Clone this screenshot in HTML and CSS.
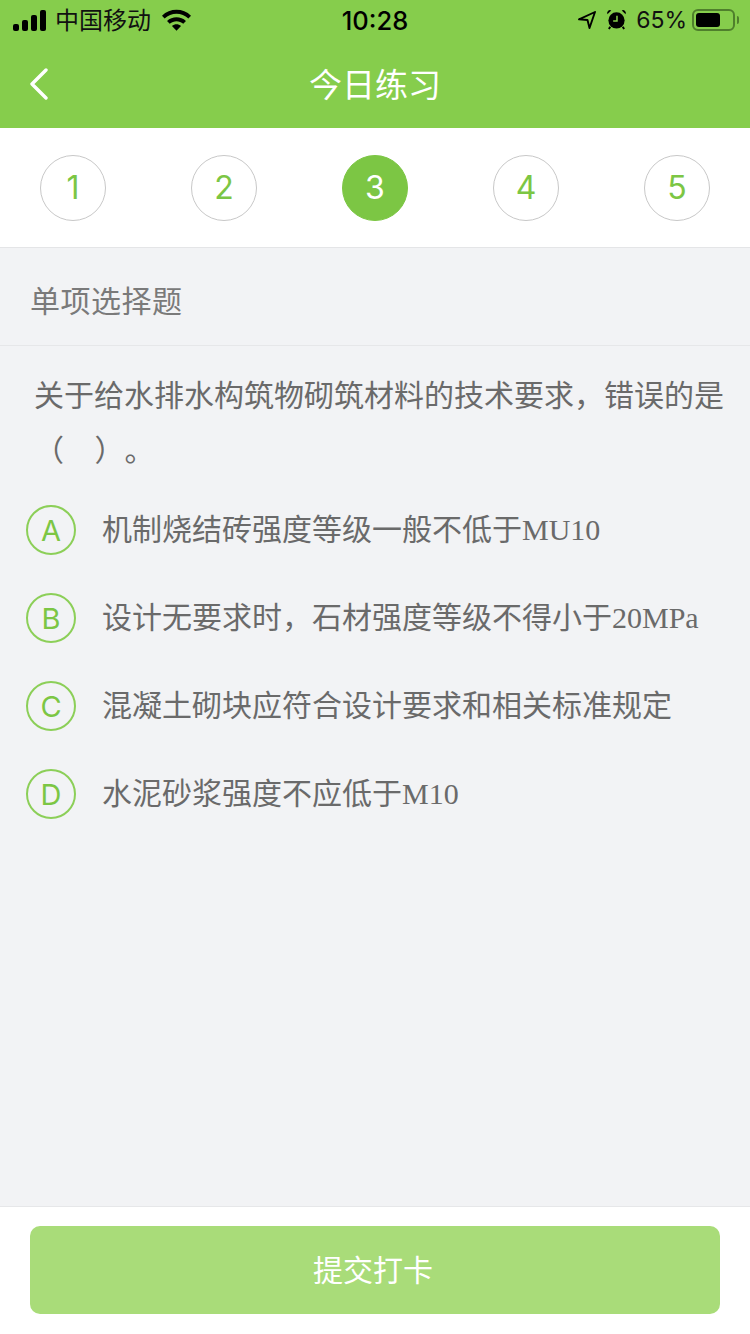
FILE: index.html
```html
<!DOCTYPE html>
<html lang="zh-CN">
<head>
    <meta charset="UTF-8">
    <meta name="viewport" content="width=device-width, initial-scale=1.0">
    <title>今日练习</title>
    <link rel="stylesheet" href="styles.css">
</head>
<body>

<header class="top">
    <!-- Status bar -->
    <div class="status-bar">
        <div class="status-left">
            <svg class="signal" width="33" height="21" viewBox="0 0 33 21" fill="#000">
                <rect x="0" y="14" width="6" height="7" rx="2"/>
                <rect x="9" y="10" width="6" height="11" rx="2"/>
                <rect x="18" y="5" width="6" height="16" rx="2"/>
                <rect x="27" y="0" width="6" height="21" rx="2"/>
            </svg>
            <span class="carrier">中国移动</span>
            <svg class="wifi" width="29" height="22" viewBox="0 0 30 22" fill="#000">
                <path d="M0 6.500C8-1.500 22-1.500 30 6.500L27.300 9.500C20.500 3 9.500 3 2.700 9.500Z"/>
                <path d="M5.200 12C10.500 6.800 19.500 6.800 24.800 12L22 15C18 11.300 12 11.300 8 15Z"/>
                <path d="M10.300 17.300C13 14.900 17 14.900 19.700 17.300L15 22Z"/>
            </svg>
        </div>
        <div class="status-time">10:28</div>
        <div class="status-right">
            <svg class="location" width="18" height="18" viewBox="0 0 18 18" fill="none" stroke="#000" stroke-width="1.900" stroke-linejoin="round">
                <path d="M17 1L1 8.300L9.500 9L11.500 17Z"/>
            </svg>
            <svg class="alarm" width="21" height="21" viewBox="0 0 22 22">
                <circle cx="11" cy="12" r="8.500" fill="#000"/>
                <path d="M1.500 5.500L5.500 1.500A3 3 0 0 0 1.500 5.500ZM20.500 5.500L16.500 1.500A3 3 0 0 1 20.500 5.500Z" fill="#000"/>
                <path d="M4.500 18.500L3 21M17.500 18.500L19 21" stroke="#000" stroke-width="2"/>
                <path d="M11.500 7V12.500H7.500" fill="none" stroke="#86cd4c" stroke-width="1.600"/>
            </svg>
            <span class="percent">65%</span>
            <div class="battery"><div class="battery-level"></div></div>
            <div class="battery-cap"></div>
        </div>
    </div>

    <!-- Nav bar -->
    <div class="nav-bar">
        <svg class="back" width="20" height="32" viewBox="0 0 20 32" fill="none" stroke="#fff" stroke-width="3.400" stroke-linecap="round" stroke-linejoin="round">
            <path d="M17 2L3 16L17 30"/>
        </svg>
        <h1 class="nav-title">今日练习</h1>
    </div>
</header>

<!-- Question numbers -->
<div class="steps">
    <div class="step">1</div>
    <div class="step">2</div>
    <div class="step active">3</div>
    <div class="step">4</div>
    <div class="step">5</div>
</div>

<main class="content">
    <div class="type-label">单项选择题</div>

    <p class="question">关于给水排水构筑物砌筑材料的技术要求，错误的是<br>（&nbsp;&nbsp;&nbsp;&nbsp;&nbsp;）。</p>

    <div class="options">
        <div class="option">
            <div class="option-key">A</div>
            <div class="option-text">机制烧结砖强度等级一般不低于MU10</div>
        </div>
        <div class="option">
            <div class="option-key">B</div>
            <div class="option-text">设计无要求时，石材强度等级不得小于20MPa</div>
        </div>
        <div class="option">
            <div class="option-key">C</div>
            <div class="option-text">混凝土砌块应符合设计要求和相关标准规定</div>
        </div>
        <div class="option">
            <div class="option-key">D</div>
            <div class="option-text">水泥砂浆强度不应低于M10</div>
        </div>
    </div>
</main>

<footer class="bottom">
    <button class="submit-btn">提交打卡</button>
</footer>

</body>
</html>
```

FILE: styles.css
```css
* {
    box-sizing: border-box;
}

body {
    font-family: 'Noto Sans CJK SC', sans-serif;
    margin: 0;
    padding: 0;
    height: 1334px;
    display: flex;
    flex-direction: column;
    background-color: #f2f3f5;
    color: #6a6a6a;
    overflow: hidden;
}

.top {
    background-color: #86cd4c;
}

.status-bar {
    height: 40px;
    display: flex;
    align-items: center;
    justify-content: space-between;
    position: relative;
    padding: 0 11px 0 13px;
    color: #000;
}

.status-left {
    display: flex;
    align-items: center;
}

.carrier {
    font-size: 24px;
    line-height: 36px;
    margin: 0 0 3px 9px;
    color: #111;
}

.wifi {
    margin-left: 11px;
}

.status-time {
    position: absolute;
    left: 0;
    right: 0;
    text-align: center;
    font-family: 'Inter', sans-serif;
    font-size: 25.500px;
    font-weight: 500;
}

.status-right {
    display: flex;
    align-items: center;
}

.alarm {
    margin: 0 0 1px 10px;
}

.percent {
    font-family: 'Inter', sans-serif;
    font-size: 23px;
    margin-left: 9px;
    color: #111;
}

.battery {
    width: 43px;
    height: 22px;
    margin-left: 5px;
    padding: 2px;
    border: 2px solid #4f7f2c;
    border-radius: 6px;
}

.battery-level {
    width: 24px;
    height: 100%;
    background-color: #000;
    border-radius: 3px;
}

.battery-cap {
    width: 2px;
    height: 8px;
    margin-left: 2px;
    background-color: #4f7f2c;
    border-radius: 0 2px 2px 0;
}

.nav-bar {
    height: 88px;
    display: flex;
    align-items: center;
    justify-content: center;
    position: relative;
    padding-bottom: 3px;
}

.back {
    position: absolute;
    left: 29px;
    top: 28px;
}

.nav-title {
    margin: 0;
    font-size: 33px;
    font-weight: 400;
    color: #fff;
}

.steps {
    height: 120px;
    display: flex;
    align-items: center;
    justify-content: space-between;
    padding: 0 40px;
    background-color: #fff;
    border-bottom: 1px solid #e4e5e7;
}

.step {
    width: 66px;
    height: 66px;
    display: flex;
    align-items: center;
    justify-content: center;
    font-family: 'Inter', sans-serif;
    font-size: 32px;
    color: #7cc644;
    border: 1px solid #c8c8c8;
    border-radius: 50%;
}

.step.active {
    background-color: #7cc644;
    border-color: #7cc644;
    color: #fff;
}

.content {
    flex: 1;
}

.type-label {
    height: 98px;
    display: flex;
    align-items: center;
    padding: 4px 0 0 30px;
    font-size: 30px;
    letter-spacing: 0.500px;
    color: #7a7a7a;
    border-bottom: 1px solid #e6e7e9;
}

.question {
    margin: 0;
    padding: 20px 0 0 34px;
    font-size: 30px;
    line-height: 55px;
    word-spacing: -0.600px;
    text-spacing-trim: space-all;
}

.options {
    margin-top: 10px;
}

.option {
    height: 88px;
    display: flex;
    align-items: center;
    padding-left: 26px;
}

.option-key {
    width: 50px;
    height: 50px;
    display: flex;
    align-items: center;
    justify-content: center;
    font-family: 'Inter', sans-serif;
    font-size: 29px;
    color: #7cc644;
    border: 2px solid #8ccf58;
    border-radius: 50%;
}

.option-text {
    margin-left: 26px;
    padding-bottom: 6px;
    font-family: 'Liberation Serif', 'Noto Sans CJK SC', serif;
    font-size: 30px;
}

.bottom {
    height: 128px;
    padding: 19px 30px 0;
    background-color: #fff;
    border-top: 1px solid #e6e7e9;
}

.submit-btn {
    width: 100%;
    height: 88px;
    padding: 0 4px 5px 0;
    font-family: 'Noto Sans CJK SC', sans-serif;
    font-size: 30px;
    color: #fff;
    background-color: #a9dc79;
    border: none;
    border-radius: 10px;
}
```
